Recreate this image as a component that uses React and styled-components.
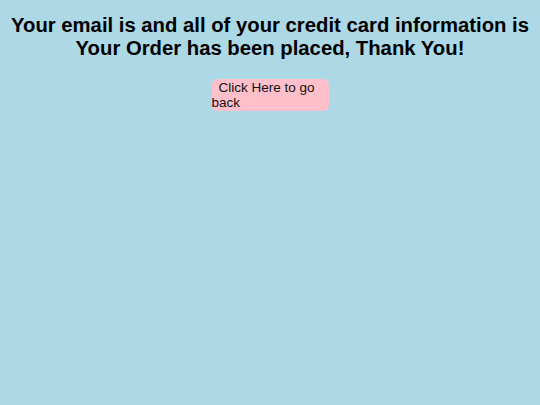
import styled, { createGlobalStyle } from 'styled-components'

const GlobalStyle = createGlobalStyle`
  html, body {
    margin: 0;
    padding: 0;
    background: lightblue;
    font-family: 'Liberation Sans', Arial, sans-serif;
  }
`

const Page = styled.div`
  min-height: 405px;
  background: lightblue;
  display: flex;
  flex-direction: column;
  align-items: center;
  padding-top: 14px;
  box-sizing: border-box;
`

const Title = styled.h1`
  margin: 0;
  font-size: 20.3px;
  line-height: 23px;
  font-weight: bold;
  text-align: center;
  color: #000;
`

const BackButton = styled.div`
  margin-top: 19px;
  width: 117px;
  height: 32px;
  padding-top: 1px;
  box-sizing: border-box;
  background: pink;
  border-radius: 6px;
  font-size: 13.5px;
  line-height: 15px;
  color: #111;
  text-indent: 7px;
  cursor: pointer;
`

export default function App() {
  const email = ''
  const card = ''
  return (
    <Page>
      <GlobalStyle />
      <Title>
        Your email is {email} and all of your credit card information is {card}
        <br />
        Your Order has been placed, Thank You!
      </Title>
      <BackButton>Click Here to go back</BackButton>
    </Page>
  )
}
